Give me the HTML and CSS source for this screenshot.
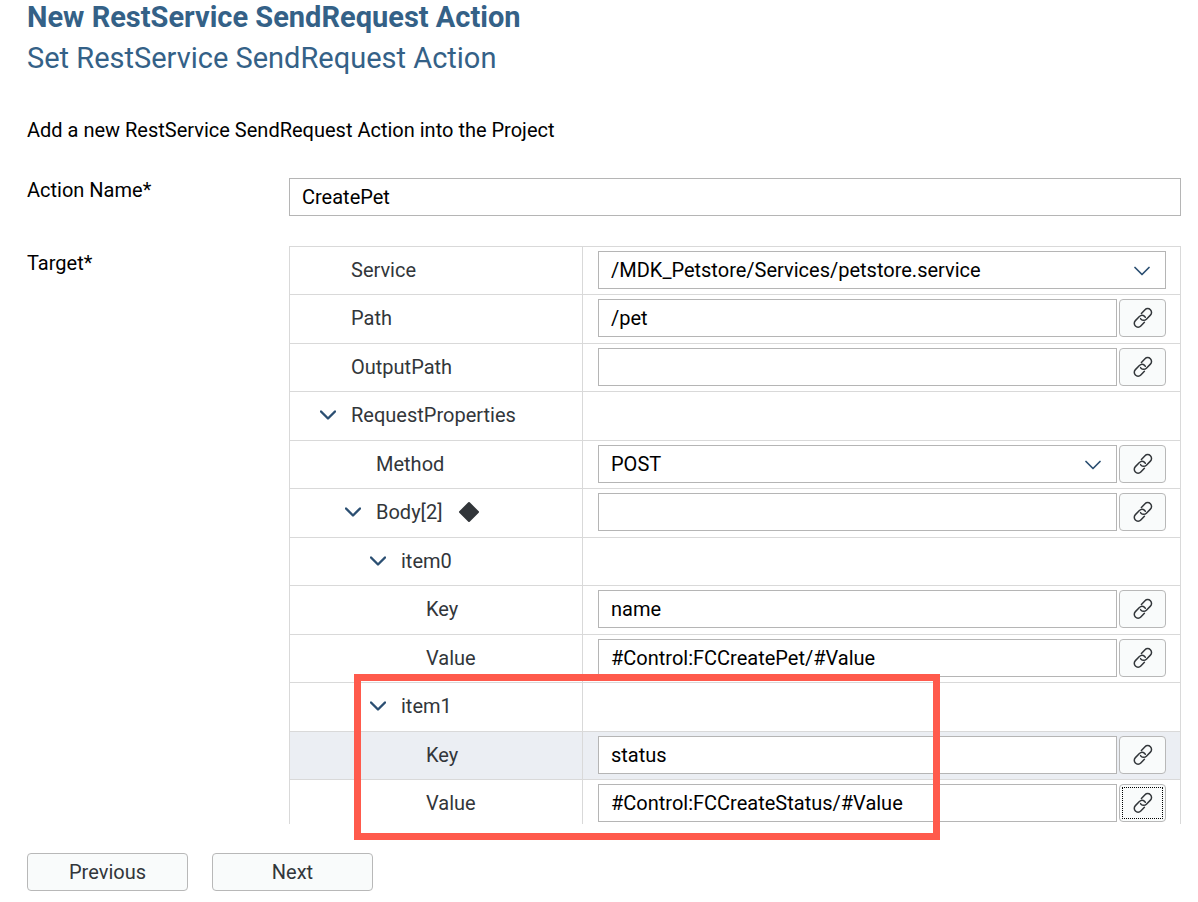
FILE: index.html
```html
<!DOCTYPE html>
<html lang="en">
<head>
<meta charset="utf-8">
<title>New RestService SendRequest Action</title>
<link rel="stylesheet" href="styles.css">
</head>
<body>
<svg class="sprite" aria-hidden="true">
  <symbol id="link" viewBox="0 0 22 22">
    <path d="M9.4 6.4 13 2.7a3.8 3.8 0 0 1 5.4 0 3.8 3.8 0 0 1 0 5.4l-4 4.1a3.8 3.8 0 0 1-5.4 0L8.6 11.6M12.4 15.3l-3.6 3.7a3.8 3.8 0 0 1-5.4 0 3.8 3.8 0 0 1 0-5.4l4-4.1a3.8 3.8 0 0 1 5.2-.1l.7.9"/>
  </symbol>
  <symbol id="chevron" viewBox="0 0 16 10">
    <path d="M1 1.5 8 8.5 15 1.5"/>
  </symbol>
</svg>
<main class="wizard">
  <h1 class="title">New RestService SendRequest Action</h1>
  <h2 class="subtitle">Set RestService SendRequest Action</h2>
  <p class="intro">Add a new RestService SendRequest Action into the Project</p>
  <form class="form">
    <label class="form-label" for="action-name">Action Name*</label>
    <input class="field" id="action-name" type="text" value="CreatePet">
    <span class="form-label" id="target-label">Target*</span>
    <div class="target">
      <div class="target-scroll">
        <table class="tree" aria-labelledby="target-label">
          <tbody>
            <tr><th class="name level-1" scope="row"><label for="service">Service</label></th>
              <td><div class="editor"><div class="select"><select class="field" id="service"><option>/MDK_Petstore/Services/petstore.service</option></select><svg class="select-arrow"><use href="#chevron"/></svg></div></div></td></tr>
            <tr><th class="name level-1" scope="row"><label for="path">Path</label></th>
              <td><div class="editor"><input class="field" id="path" type="text" value="/pet"><button class="button link-button" type="button" aria-label="Bind Path"><svg><use href="#link"/></svg></button></div></td></tr>
            <tr><th class="name level-1" scope="row"><label for="output">OutputPath</label></th>
              <td><div class="editor"><input class="field" id="output" type="text"><button class="button link-button" type="button" aria-label="Bind OutputPath"><svg><use href="#link"/></svg></button></div></td></tr>
            <tr><th class="name level-1 parent" scope="row"><div class="node"><button class="toggle" type="button" aria-label="Collapse RequestProperties"><svg><use href="#chevron"/></svg></button>RequestProperties</div></th><td></td></tr>
            <tr><th class="name level-2" scope="row"><label for="method">Method</label></th>
              <td><div class="editor"><div class="select"><select class="field" id="method"><option>POST</option></select><svg class="select-arrow"><use href="#chevron"/></svg></div><button class="button link-button" type="button" aria-label="Bind Method"><svg><use href="#link"/></svg></button></div></td></tr>
            <tr><th class="name level-2 parent" scope="row"><div class="node"><button class="toggle" type="button" aria-label="Collapse Body"><svg><use href="#chevron"/></svg></button><label for="body">Body[2]</label><svg class="diamond" viewBox="0 0 22 22"><path d="M11 2 20 11 11 20 2 11Z"/></svg></div></th>
              <td><div class="editor"><input class="field" id="body" type="text"><button class="button link-button" type="button" aria-label="Bind Body"><svg><use href="#link"/></svg></button></div></td></tr>
            <tr><th class="name level-3 parent" scope="row"><div class="node"><button class="toggle" type="button" aria-label="Collapse item0"><svg><use href="#chevron"/></svg></button>item0</div></th><td></td></tr>
            <tr><th class="name level-4" scope="row"><label for="key0">Key</label></th>
              <td><div class="editor"><input class="field" id="key0" type="text" value="name"><button class="button link-button" type="button" aria-label="Bind item0 Key"><svg><use href="#link"/></svg></button></div></td></tr>
            <tr><th class="name level-4" scope="row"><label for="value0">Value</label></th>
              <td><div class="editor"><input class="field" id="value0" type="text" value="#Control:FCCreatePet/#Value"><button class="button link-button" type="button" aria-label="Bind item0 Value"><svg><use href="#link"/></svg></button></div></td></tr>
            <tr><th class="name level-3 parent" scope="row"><div class="node"><button class="toggle" type="button" aria-label="Collapse item1"><svg><use href="#chevron"/></svg></button>item1</div></th><td></td></tr>
            <tr class="highlighted"><th class="name level-4" scope="row"><label for="key1">Key</label></th>
              <td><div class="editor"><input class="field" id="key1" type="text" value="status"><button class="button link-button" type="button" aria-label="Bind item1 Key"><svg><use href="#link"/></svg></button></div></td></tr>
            <tr><th class="name level-4" scope="row"><label for="value1">Value</label></th>
              <td><div class="editor"><input class="field" id="value1" type="text" value="#Control:FCCreateStatus/#Value"><button class="button link-button focused" type="button" aria-label="Bind item1 Value"><svg><use href="#link"/></svg></button></div></td></tr>
          </tbody>
        </table>
      </div>
      <div class="callout"></div>
    </div>
  </form>
  <div class="actions">
    <button class="button nav-button" type="button">Previous</button>
    <button class="button nav-button" type="button">Next</button>
  </div>
</main>
</body>
</html>
```
FILE: styles.css
```css
* { box-sizing: border-box; }
body {
  margin: 0;
  background: #fff;
  color: #000;
  font: 20px/24px Roboto, "Liberation Sans", sans-serif;
}
.sprite { display: none; }
svg { fill: none; stroke-linecap: round; stroke-linejoin: round; }
.wizard { padding: 0 17px 10px 27px; }
.title, .subtitle { margin: 0; color: #346187; font-size: 29px; }
.title { line-height: 34px; font-weight: 700; }
.subtitle { margin-top: 6px; line-height: 36px; font-weight: 400; }
.intro { margin: 42px 0 0; }
.form {
  display: grid;
  grid-template-columns: 262px minmax(0, 1fr);
  row-gap: 30px;
  margin-top: 36px;
}
.form-label { color: #000; }
#target-label { padding-top: 5px; }
.field {
  display: block;
  flex: 1;
  width: 100%;
  min-width: 0;
  height: 38px;
  margin: 0;
  padding: 0 12px;
  border: 1px solid #b5b5b5;
  border-radius: 0;
  background: #fff;
  color: #000;
  font: inherit;
  appearance: none;
}
.target { position: relative; }
.target-scroll { height: 578px; overflow: hidden; }
.tree {
  width: 100%;
  table-layout: fixed;
  border-spacing: 0;
  border-right: 1px solid #d9d9d9;
  border-left: 1px solid #d9d9d9;
}
.tree tr { height: 48px; }
.tree tr:nth-child(even) { height: 49px; }
.tree th, .tree td { padding: 0 0 2px; border-top: 1px solid #d9d9d9; }
.tree th { width: 293px; border-right: 1px solid #d9d9d9; }
.tree td { padding-right: 14px; padding-left: 15px; }
.highlighted { background: #ebeef3; }
.name { color: #32363a; font-weight: 400; text-align: left; }
.tree .level-1 { padding-left: 61px; }
.tree .level-2 { padding-left: 86px; }
.tree .level-3 { padding-left: 111px; }
.tree .level-4 { padding-left: 136px; }
.tree .level-1.parent { padding-left: 29px; }
.tree .level-2.parent { padding-left: 54px; }
.tree .level-3.parent { padding-left: 79px; }
.node { display: flex; align-items: center; }
.toggle {
  display: flex;
  width: 18px;
  margin: 0 14px 0 0;
  padding: 0 1px;
  border: 0;
  background: none;
}
.toggle svg, .select-arrow { width: 16px; height: 10px; stroke: #2b4f72; stroke-width: 1.7; }
.toggle svg { stroke-width: 2.4; }
.diamond { width: 22px; height: 22px; margin-left: 16px; fill: #32363a; stroke: #32363a; stroke-width: 2; }
.editor { display: flex; gap: 2px; }
.select { position: relative; flex: 1; min-width: 0; }
.select-arrow { position: absolute; top: 15px; right: 16px; pointer-events: none; }
.button {
  border: 1px solid #b8b8b8;
  border-radius: 4px;
  background: #f9fbfb;
  color: #32363a;
  font: inherit;
}
.link-button { display: grid; place-items: center; flex: none; width: 47px; height: 38px; padding: 0; }
.link-button svg { width: 22px; height: 22px; stroke: #32363a; stroke-width: 1.5; }
.focused { outline: 1px dotted #000; outline-offset: -4px; }
.callout {
  position: absolute;
  top: 428px;
  left: 65px;
  width: 586px;
  height: 166px;
  border: 7px solid #ff5a4c;
  pointer-events: none;
}
.actions { display: flex; gap: 24px; margin-top: 29px; }
.nav-button { width: 161px; height: 38px; }
```
